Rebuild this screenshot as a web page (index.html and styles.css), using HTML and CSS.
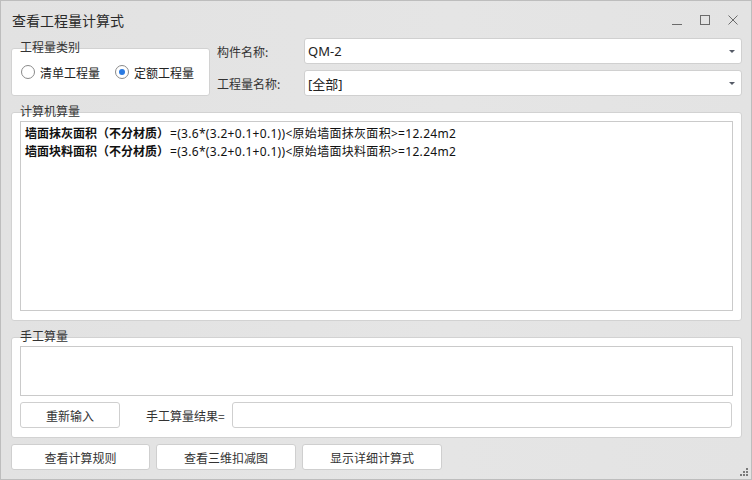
FILE: index.html
```html
<!DOCTYPE html>
<html lang="zh-CN">
<head>
<meta charset="utf-8">
<title>查看工程量计算式</title>
<link rel="stylesheet" href="styles.css">
</head>
<body>
<div class="window">
  <div class="titlebar">
    <span class="title">查看工程量计算式</span>
    <div class="controls">
      <svg class="ctl" width="10" height="10" viewBox="0 0 10 10"><path d="M0 9.5H10" stroke="#6b6b6b" stroke-width="1" fill="none"/></svg>
      <svg class="ctl" width="10" height="10" viewBox="0 0 10 10"><rect x="0.5" y="0.5" width="9" height="9" stroke="#6b6b6b" stroke-width="1" fill="none"/></svg>
      <svg class="ctl" width="10" height="10" viewBox="0 0 10 10"><path d="M0.5 0.5L9.5 9.5M9.5 0.5L0.5 9.5" stroke="#6b6b6b" stroke-width="1" fill="none"/></svg>
    </div>
  </div>

  <div class="top-row">
    <div class="group type-group">
      <div class="group-title">工程量类别</div>
      <div class="group-box radios">
        <label class="radio"><span class="radio-circle"></span><span>清单工程量</span></label>
        <label class="radio checked"><span class="radio-circle"><span class="radio-dot"></span></span><span>定额工程量</span></label>
      </div>
    </div>
    <div class="form">
      <div class="form-row">
        <span class="form-label">构件名称:</span>
        <div class="combo"><span class="combo-text">QM-2</span><span class="arrow"></span></div>
      </div>
      <div class="form-row">
        <span class="form-label">工程量名称:</span>
        <div class="combo"><span class="combo-text">[全部]</span><span class="arrow"></span></div>
      </div>
    </div>
  </div>

  <div class="group calc-group">
    <div class="group-title">计算机算量</div>
    <div class="group-box">
      <div class="formula-area">
        <div class="formula"><b>墙面抹灰面积（不分材质）</b><span class="expr">=(3.6*(3.2+0.1+0.1))&lt;原始墙面抹灰面积&gt;=12.24m2</span></div>
        <div class="formula"><b>墙面块料面积（不分材质）</b><span class="expr">=(3.6*(3.2+0.1+0.1))&lt;原始墙面块料面积&gt;=12.24m2</span></div>
      </div>
    </div>
  </div>

  <div class="group manual-group">
    <div class="group-title">手工算量</div>
    <div class="group-box manual-box">
      <div class="manual-input"></div>
      <div class="manual-row">
        <div class="btn reinput">重新输入</div>
        <span class="result-label">手工算量结果=</span>
        <div class="result-input"></div>
      </div>
    </div>
  </div>

  <div class="bottom-buttons">
    <div class="btn bottom-btn first">查看计算规则</div>
    <div class="btn bottom-btn">查看三维扣减图</div>
    <div class="btn bottom-btn">显示详细计算式</div>
  </div>

  <svg class="grip" width="9" height="9" viewBox="0 0 9 9">
    <rect x="6" y="0" width="2" height="2" fill="#7a7a7a"/>
    <rect x="3" y="3" width="2" height="2" fill="#7a7a7a"/>
    <rect x="6" y="3" width="2" height="2" fill="#7a7a7a"/>
    <rect x="0" y="6" width="2" height="2" fill="#7a7a7a"/>
    <rect x="3" y="6" width="2" height="2" fill="#7a7a7a"/>
    <rect x="6" y="6" width="2" height="2" fill="#7a7a7a"/>
  </svg>
</div>
</body>
</html>
```

FILE: styles.css
```css
* { box-sizing: border-box; }
html, body { margin: 0; padding: 0; }
body {
  font-family: "Noto Sans", "Noto Sans CJK SC", sans-serif;
  font-size: 12px;
  color: #333;
}
.window {
  position: relative;
  width: 752px;
  height: 480px;
  border: 1px solid #bdbdbd;
  background: linear-gradient(90deg, #e2e2e2, #e5e5e5 60%, #e3e3e3);
  padding: 0 9px 0 10px;
  display: flex;
  flex-direction: column;
}
.titlebar {
  height: 37px;
  display: flex;
  align-items: center;
  justify-content: space-between;
  margin: 0 -9px 0 -10px;
  padding: 0 13px 0 11px;
}
.title {
  font-family: "Noto Sans CJK SC", sans-serif;
  font-size: 14px;
  color: #2a2a2a;
}
.controls {
  display: flex;
  align-items: center;
  gap: 18px;
}
.ctl { display: block; }

.top-row {
  display: flex;
  align-items: flex-start;
  height: 58px;
}
.group { display: flex; flex-direction: column; }
.group-title {
  font-family: "Noto Sans CJK SC", sans-serif;
  height: 14px;
  line-height: 14px;
  margin-bottom: -6px;
  padding-left: 9px;
  position: relative;
  z-index: 1;
  color: #333;
}
.group-box {
  background: #fff;
  border: 1px solid #d2d2d2;
  border-radius: 3px;
}
.type-group {
  width: 199px;
  margin-top: 2px;
}
.radios {
  height: 48px;
  display: flex;
  align-items: center;
  padding-left: 9px;
  gap: 15px;
}
.radio {
  display: flex;
  align-items: center;
  gap: 5px;
  font-family: "Noto Sans CJK SC", sans-serif;
  color: #222;
}
.radio-circle {
  width: 14px;
  height: 14px;
  border: 1px solid #8a8a8a;
  border-radius: 50%;
  background: #fff;
  display: flex;
  align-items: center;
  justify-content: center;
}
.radio-dot {
  width: 6px;
  height: 6px;
  border-radius: 50%;
  background: #2a7ae2;
}
.form {
  flex: 1;
  margin-left: 7px;
  display: flex;
  flex-direction: column;
  gap: 6px;
}
.form-row {
  display: flex;
  align-items: center;
  height: 26px;
}
.form-label {
  width: 87px;
  font-family: "Noto Sans CJK SC", sans-serif;
  color: #333;
}
.combo {
  flex: 1;
  height: 26px;
  background: #fff;
  border: 1px solid #d0d0d0;
  border-radius: 3px;
  display: flex;
  align-items: center;
  justify-content: space-between;
  padding: 0 6px 0 3px;
}
.combo-text { font-size: 13px; color: #222; }
.arrow {
  width: 0;
  height: 0;
  border-left: 3px solid transparent;
  border-right: 3px solid transparent;
  border-top: 3px solid #555a66;
}

.calc-group { margin-top: 8px; }
.calc-group .group-box {
  height: 209px;
  padding: 8px;
}
.formula-area {
  height: 190px;
  border: 1px solid #cacaca;
  padding: 2px 4px;
}
.formula {
  height: 18px;
  line-height: 18px;
  white-space: nowrap;
  color: #111;
}
.formula b {
  font-family: "Noto Sans CJK SC", sans-serif;
  font-weight: 700;
  font-size: 12px;
}
.expr {
  margin-left: 1px;
  font-size: 12px;
  letter-spacing: 0.3px;
}

.manual-group { margin-top: 8px; }
.manual-box {
  height: 101px;
  padding: 8px;
  display: flex;
  flex-direction: column;
  gap: 6px;
}
.manual-input {
  height: 50px;
  border: 1px solid #cacaca;
}
.manual-row {
  display: flex;
  align-items: center;
  height: 26px;
}
.btn {
  background: #fff;
  border: 1px solid #cfcfcf;
  border-radius: 3px;
  height: 26px;
  display: flex;
  align-items: center;
  justify-content: center;
  font-family: "Noto Sans CJK SC", sans-serif;
  color: #333;
}
.reinput { width: 100px; }
.result-label {
  margin-left: 26px;
  width: 86px;
  font-family: "Noto Sans CJK SC", sans-serif;
  color: #333;
}
.result-input {
  flex: 1;
  height: 26px;
  background: #fff;
  border: 1px solid #cfcfcf;
  border-radius: 3px;
  margin-right: 1px;
}
.bottom-buttons {
  margin-top: 6px;
  display: flex;
  gap: 6px;
}
.bottom-btn { width: 140px; }
.bottom-btn.first { width: 139px; }
.grip {
  position: absolute;
  right: 2px;
  bottom: 2px;
}
```
